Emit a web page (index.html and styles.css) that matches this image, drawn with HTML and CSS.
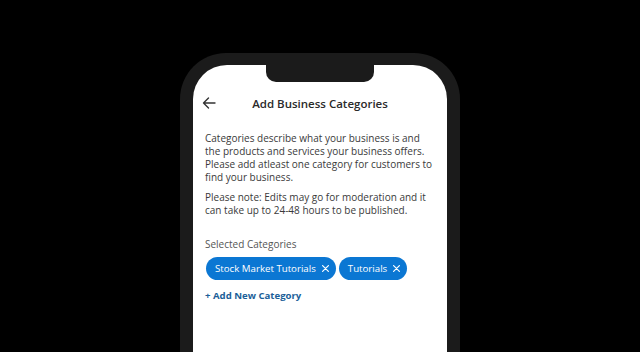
FILE: index.html
```html
<!DOCTYPE html>
<html>
<head>
<meta charset="utf-8">
<link rel="stylesheet" href="styles.css">
</head>
<body>
<div class="stage">
  <div class="phone">
    <div class="screen">
      <div class="notch"></div>
      <div class="header">
        <svg class="back" width="14" height="12" viewBox="0 0 14 12"><path d="M13 6H1.5M6.5 1L1.5 6l5 5" fill="none" stroke="#333" stroke-width="1.4" stroke-linecap="round" stroke-linejoin="round"/></svg>
        <div class="title">Add Business Categories</div>
      </div>
      <div class="content">
        <p class="para">Categories describe what your business is and the products and services your business offers. Please add atleast one category for customers to find your business.</p>
        <p class="para">Please note: Edits may go for moderation and it can take up to 24-48 hours to be published.</p>
        <div class="label">Selected Categories</div>
        <div class="chips">
          <span class="chip">Stock Market Tutorials<svg class="x" width="7" height="7" viewBox="0 0 7 7"><path d="M0.6 0.6L6.4 6.4M6.4 0.6L0.6 6.4" stroke="#fff" stroke-width="1.2" stroke-linecap="round"/></svg></span>
          <span class="chip">Tutorials<svg class="x" width="7" height="7" viewBox="0 0 7 7"><path d="M0.6 0.6L6.4 6.4M6.4 0.6L0.6 6.4" stroke="#fff" stroke-width="1.2" stroke-linecap="round"/></svg></span>
        </div>
        <div class="add">+ Add New Category</div>
      </div>
    </div>
  </div>
</div>
</body>
</html>
```
FILE: styles.css
```css
html, body { margin: 0; padding: 0; background: #000; }
.stage {
  width: 640px; height: 352px; overflow: hidden;
  display: flex; justify-content: center;
  padding-top: 53px; box-sizing: border-box;
  font-family: "Open Sans", "Liberation Sans", sans-serif;
}
.phone {
  width: 280px; height: 360px;
  background: #1b1b1b;
  border-radius: 46px 46px 0 0;
  padding: 12px 13px 0 13px;
  box-sizing: border-box;
}
.screen {
  background: #fff;
  height: 100%;
  border-radius: 34px 34px 0 0;
  position: relative;
  display: flex; flex-direction: column;
}
.notch {
  position: absolute; left: 73px; top: -1px;
  width: 108px; height: 18px;
  background: #1b1b1b;
  border-radius: 0 0 10px 10px;
}
.header {
  height: 28px; margin-top: 24px;
  display: flex; align-items: center;
  padding: 0 9px;
  position: relative;
}
.back { display: block; }
.title {
  position: absolute; left: 0; right: 0; text-align: center;
  font-weight: 600; font-size: 11.5px; color: #2a2a2a;
}
.content { padding: 15px 12px 0 12px; }
.para {
  margin: 0 0 7px 0;
  font-size: 10px; line-height: 13px; color: #3a3a3a;
}
.label { margin-top: 21px; font-size: 10px; color: #555; line-height: 13px; }
.chips { display: flex; gap: 3px; margin-top: 6px; margin-left: 1px; }
.chip {
  background: #0b77d3; color: #fff;
  height: 23px; border-radius: 12px;
  display: flex; align-items: center;
  padding: 0 7px 0 9px;
  font-size: 9.7px; font-weight: 500;
}
.x { margin-left: 6px; display: block; }
.add { margin-top: 9px; font-size: 9.6px; font-weight: 700; color: #1c5f99; }
```
